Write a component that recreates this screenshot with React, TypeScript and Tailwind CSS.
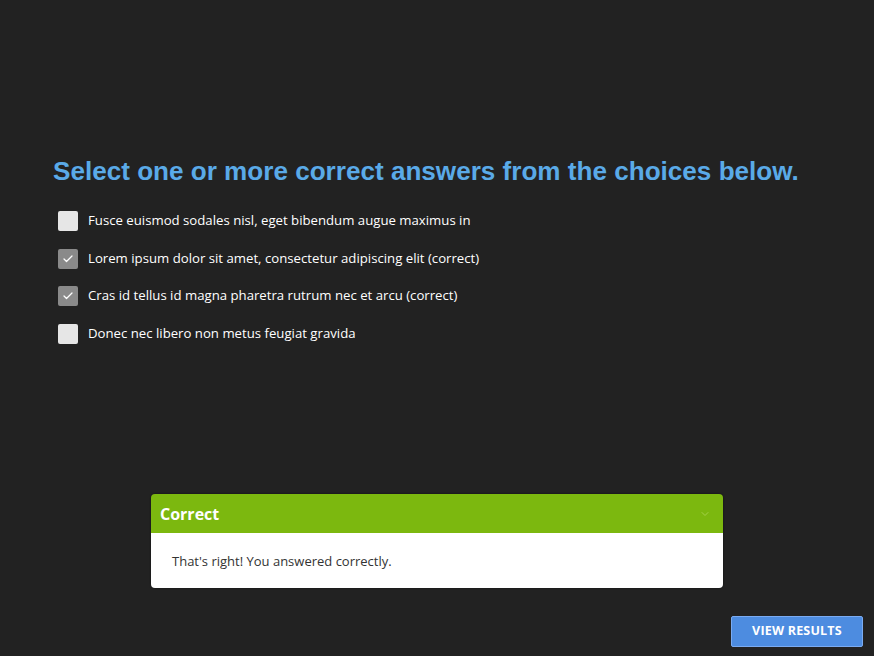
import { Check, ChevronDown } from 'lucide-react';

const choices = [
  { text: 'Fusce euismod sodales nisl, eget bibendum augue maximus in', checked: false },
  { text: 'Lorem ipsum dolor sit amet, consectetur adipiscing elit (correct)', checked: true },
  { text: 'Cras id tellus id magna pharetra rutrum nec et arcu (correct)', checked: true },
  { text: 'Donec nec libero non metus feugiat gravida', checked: false },
];

export default function App() {
  return (
    <div className="w-full h-[656px] bg-[#222222] flex flex-col font-['Open_Sans',sans-serif] overflow-hidden">
      <div className="pt-[155px] pl-[53px]">
        <h1 className="font-['Liberation_Sans',Arial,sans-serif] font-bold text-[26.1px] leading-[32px] text-[#5aaae8]">
          Select one or more correct answers from the choices below.
        </h1>
        <ul className="mt-[24px] ml-[5px] flex flex-col gap-[17.6px]">
          {choices.map((c) => (
            <li key={c.text} className="flex items-center gap-[10px] h-[20px]">
              <span
                className={
                  'w-[20px] h-[20px] rounded-[2px] flex items-center justify-center ' +
                  (c.checked ? 'bg-[#8a8a8a]' : 'bg-[#e6e6e6]')
                }
              >
                {c.checked && <Check className="w-[12px] h-[12px] text-white" strokeWidth={2.5} />}
              </span>
              <span className="text-[13.2px] text-white">{c.text}</span>
            </li>
          ))}
        </ul>
      </div>

      <div className="mt-auto ml-[151px] w-[572px] rounded-[4px] overflow-hidden shadow-[0_0_2px_rgba(0,0,0,0.6)]">
        <div className="h-[39px] bg-[#7cb80f] flex items-center justify-between pl-[9px] pr-[12px]">
          <span className="text-white font-bold text-[16px]">Correct</span>
          <ChevronDown className="w-[12px] h-[12px] text-[#a4d14a]" strokeWidth={2} />
        </div>
        <div className="h-[55px] bg-white flex items-center pl-[21px] pt-[3px]">
          <span className="text-[13px] text-[#333333]">That's right! You answered correctly.</span>
        </div>
      </div>

      <div className="flex justify-end pr-[11px] pt-[28px] pb-[9px]">
        <button className="w-[132px] h-[31px] bg-[#4d8ce0] border border-[#7aabf2] rounded-[2px] text-white font-bold text-[12.5px] tracking-[0.2px]">
          VIEW RESULTS
        </button>
      </div>
    </div>
  );
}
